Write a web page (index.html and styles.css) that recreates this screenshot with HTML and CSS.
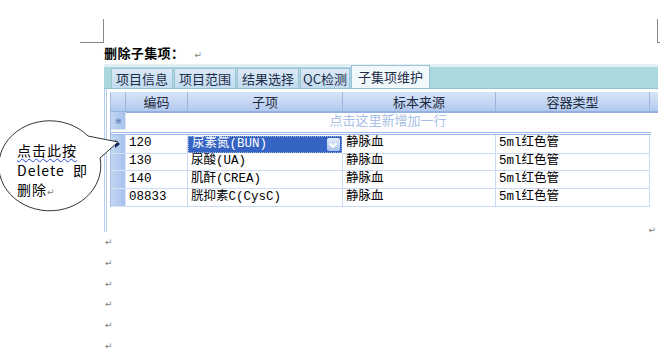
FILE: index.html
```html
<!DOCTYPE html>
<html>
<head>
    <meta charset="utf-8">
    <title>删除子集项</title>
    <link rel="stylesheet" href="styles.css">
</head>
<body>
    <div class="page">
        <div class="crop-mark crop-left"></div>
        <div class="crop-mark crop-right"></div>

        <div class="doc">
            <p class="heading">删除子集项：<span class="pm">↵</span></p>

            <div class="shot">
                <div class="tabs">
                    <span class="tab">项目信息</span>
                    <span class="tab">项目范围</span>
                    <span class="tab">结果选择</span>
                    <span class="tab tab-qc">QC检测</span>
                    <span class="tab active">子集项维护</span>
                </div>
                <div class="grid-area">
                    <div class="grid">
                        <div class="row head">
                            <div class="rh"></div>
                            <div class="hc">编码</div>
                            <div class="hc">子项</div>
                            <div class="hc">标本来源</div>
                            <div class="hc">容器类型</div>
                            <div class="hc last"></div>
                        </div>
                        <div class="row new-row">
                            <div class="rh star">✻</div>
                            <div class="new-hint">点击这里新增加一行</div>
                        </div>
                        <div class="data">
                            <div class="row">
                                <div class="rh current"><span class="arrow"></span></div>
                                <div class="c">120</div>
                                <div class="c selected">尿素氮(BUN)<span class="drop"></span></div>
                                <div class="c">静脉血</div>
                                <div class="c">5ml红色管</div>
                            </div>
                            <div class="row">
                                <div class="rh"></div>
                                <div class="c">130</div>
                                <div class="c">尿酸(UA)</div>
                                <div class="c">静脉血</div>
                                <div class="c">5ml红色管</div>
                            </div>
                            <div class="row">
                                <div class="rh"></div>
                                <div class="c">140</div>
                                <div class="c">肌酐(CREA)</div>
                                <div class="c">静脉血</div>
                                <div class="c">5ml红色管</div>
                            </div>
                            <div class="row">
                                <div class="rh"></div>
                                <div class="c">08833</div>
                                <div class="c">胱抑素C(CysC)</div>
                                <div class="c">静脉血</div>
                                <div class="c">5ml红色管</div>
                            </div>
                        </div>
                    </div>
                    <span class="pm side-pm">↵</span>
                </div>
            </div>

            <div class="empty-lines">
                <p class="pm">↵</p>
                <p class="pm">↵</p>
                <p class="pm">↵</p>
                <p class="pm">↵</p>
                <p class="pm">↵</p>
                <p class="pm">↵</p>
            </div>
        </div>

        <!-- speech bubble callout pointing at the current row -->
        <div class="callout">
            <svg width="125" height="100" viewBox="0 118 125 100">
                <path d="M88 136 A51 45 0 1 0 100 158 L118 142 Z" fill="#ffffff" stroke="#333" stroke-width="1"/>
            </svg>
            <div class="callout-text">
                <span class="squiggle">点击此按</span><br>
                Delete&nbsp; 即<br>
                删除<span class="pm">↵</span>
            </div>
        </div>
    </div>
</body>
</html>
```

FILE: styles.css
```css
body {
    margin: 0;
    background: #ffffff;
    font-family: "Noto Sans CJK SC", sans-serif;
    color: #000000;
}

.page {
    position: relative;
    width: 660px;
    height: 351px;
    overflow: hidden;
}

.crop-mark {
    position: absolute;
    top: 19px;
    width: 23px;
    height: 23px;
    border-color: #888888;
    border-style: solid;
}

.crop-left {
    left: 80px;
    border-width: 0 1px 1px 0;
}

.crop-right {
    left: 657px;
    border-width: 0 0 1px 1px;
}

.doc {
    padding: 43px 0 0 104px;
}

.heading {
    margin: 0;
    height: 21px;
    font-size: 13px;
    font-weight: bold;
    line-height: 20px;
    letter-spacing: 0.4px;
}

.pm {
    font-family: "DejaVu Sans", sans-serif;
    font-size: 9px;
    font-weight: normal;
    letter-spacing: 0;
    color: #808080;
}

.heading .pm {
    margin-left: 10px;
}

/* ---- screenshot of the app ---- */

.shot {
    width: 554px;
    border-top: 3px solid #e2f0f6;
}

.tabs {
    display: flex;
    align-items: flex-end;
    height: 21px;
    padding-left: 7px;
    background: #a9d9df;
    border-bottom: 1px solid #8ec3cc;
}

.tab {
    height: 19px;
    margin-right: 1px;
    padding: 0 4px;
    background: linear-gradient(#dae9f6, #c2dbef);
    border: 1px solid #9ec2d6;
    border-bottom: none;
    font-size: 13px;
    line-height: 19px;
    color: #1c2c48;
}

.tab.tab-qc {
    padding: 0 2px;
}

.tab.active {
    height: 22px;
    padding: 0 6px;
    background: #f2f9fc;
    line-height: 21px;
}

.grid-area {
    position: relative;
    height: 140px;
    padding: 3px 0 0 3px;
    border-left: 3px double #b4cdef;
    background: #ffffff;
}

.grid {
    border-left: 1px solid #9fbbe6;
}

.row {
    display: grid;
    grid-template-columns: 15px 62px 155px 153px 154px 8px;
}

.rh {
    background: linear-gradient(90deg, #c3d6f3, #a7c2ec);
    border-right: 1px solid #d9e5f7;
    border-bottom: 1px solid #d9e5f7;
}

.head {
    height: 20px;
}

.hc {
    background: linear-gradient(#d8e5f8, #b2c9ee);
    border-right: 1px solid #9cb6e0;
    border-bottom: 2px solid #93b0e2;
    font-size: 13px;
    line-height: 19px;
    text-align: center;
    color: #1e2a40;
}

.head .rh {
    background: linear-gradient(#d8e5f8, #b2c9ee);
    border-right: 1px solid #9cb6e0;
    border-bottom: 2px solid #93b0e2;
}

.hc.last {
    border-right: none;
}

.new-row {
    height: 17px;
}

.star {
    font-size: 8px;
    line-height: 17px;
    text-align: center;
    color: #5f80b8;
}

.new-hint {
    grid-column: 2 / 6;
    font-size: 13px;
    line-height: 16px;
    text-align: center;
    color: #a9c0e6;
}

.data {
    margin-top: 3px;
    width: 540px;
    border-top: 3px double #9bb9e6;
}

.data .row {
    height: 18px;
}

.c {
    position: relative;
    padding-left: 3px;
    border-right: 1px solid #cbdaf2;
    border-bottom: 1px solid #cbdaf2;
    font-family: "Liberation Mono", "Noto Sans CJK SC", monospace;
    font-size: 12.5px;
    line-height: 17px;
    white-space: nowrap;
}

.c.selected {
    margin: 1px 1px 1px 0;
    line-height: 15px;
    background: #3564c4;
    border: 1px dotted #9db4e0;
    color: #ffffff;
}

.drop {
    position: absolute;
    top: 1px;
    right: 1px;
    width: 13px;
    height: 13px;
    border-radius: 2px;
    background: linear-gradient(#e6eefb, #a9c2ea);
}

.drop::after {
    content: "";
    position: absolute;
    left: 3px;
    top: 3px;
    width: 4px;
    height: 4px;
    border-right: 2px solid #ffffff;
    border-bottom: 2px solid #ffffff;
    transform: rotate(45deg);
    filter: drop-shadow(0 0 0.5px #4064b0);
}

.current {
    position: relative;
}

.arrow {
    position: absolute;
    left: 4px;
    top: 5px;
    border-left: 5px solid #10205a;
    border-top: 4px solid transparent;
    border-bottom: 4px solid transparent;
}

.side-pm {
    position: absolute;
    right: 2px;
    top: 136px;
}

.empty-lines .pm {
    margin: 0 0 0 1px;
    height: 20.8px;
    line-height: 20.8px;
}

/* ---- callout ---- */

.callout {
    position: absolute;
    left: 0;
    top: 118px;
    width: 125px;
    height: 100px;
}

.callout svg {
    position: absolute;
    left: 0;
    top: 0;
}

.callout-text {
    position: absolute;
    left: 17px;
    top: 23px;
    font-size: 14px;
    line-height: 19.5px;
    letter-spacing: 1px;
}

.squiggle {
    text-decoration: underline wavy #2a44e0;
    text-decoration-thickness: 1px;
    text-underline-offset: 2px;
}
```
